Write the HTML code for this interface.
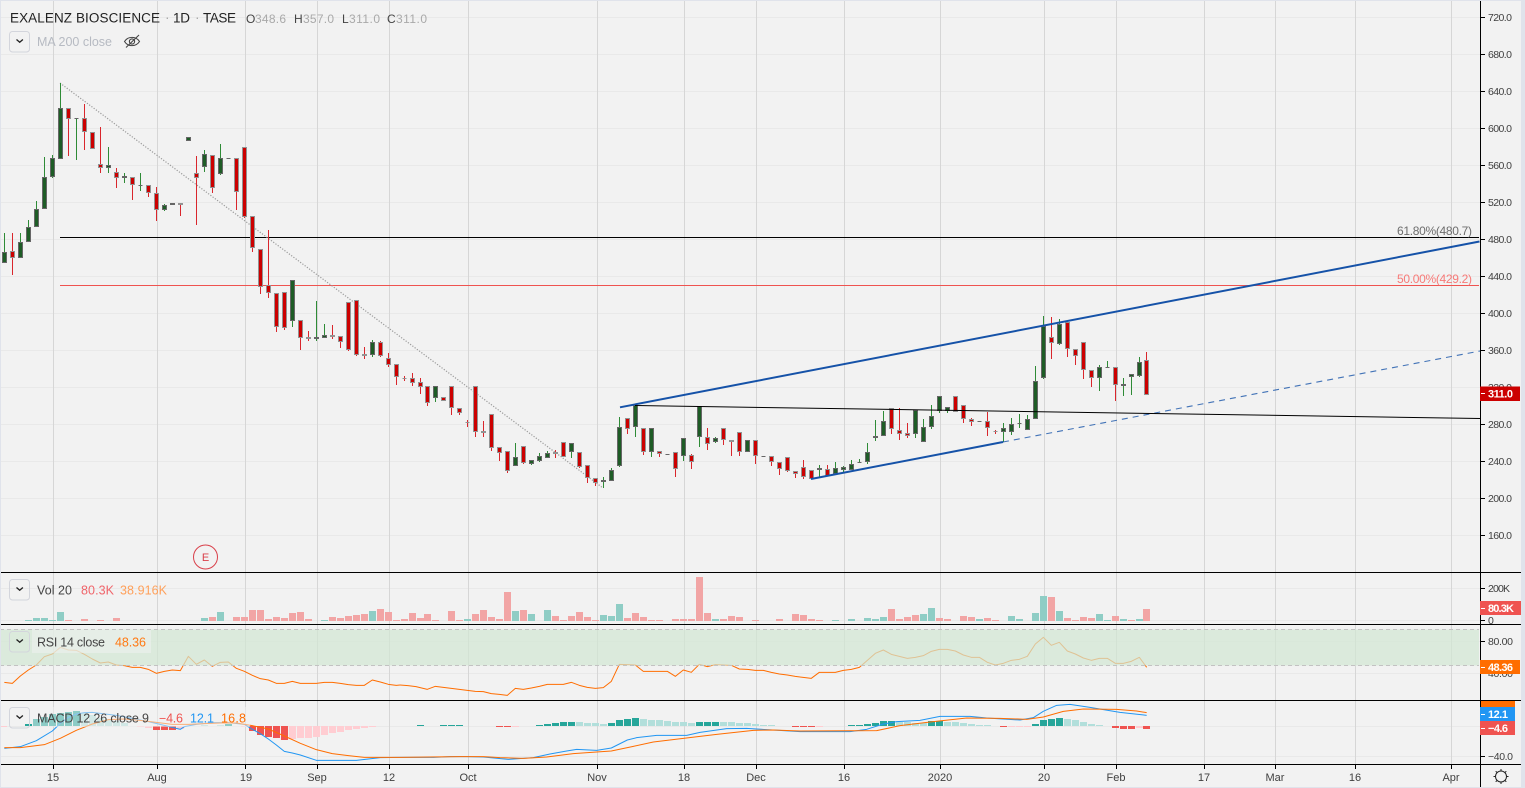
<!DOCTYPE html>
<html lang="en"><head><meta charset="utf-8"><title>EXALENZ BIOSCIENCE</title>
<style>html,body{margin:0;padding:0;background:#f2f2f2;width:1525px;height:788px;overflow:hidden}svg{display:block;font-family:"Liberation Sans",sans-serif}</style></head><body>
<svg width="1525" height="788" viewBox="0 0 1525 788" xmlns="http://www.w3.org/2000/svg">
<rect width="1525" height="788" fill="#f2f2f2"/>
<!-- grid -->
<path stroke="#e9e9e9" fill="none" d="M0 17.5H1480M0 54.5H1480M0 91.5H1480M0 128.5H1480M0 165.5H1480M0 202.5H1480M0 239.5H1480M0 276.5H1480M0 313.5H1480M0 350.5H1480M0 387.5H1480M0 424.5H1480M0 461.5H1480M0 498.5H1480M0 535.5H1480M0 588.5H1480M0 620.5H1480M0 641.5H1480M0 673.5H1480M0 726.5H1480M0 756.5H1480"/>
<path stroke="#d6d6d6" fill="none" d="M53.5 0V765M157.5 0V765M245.5 0V765M317.5 0V765M389.5 0V765M468.5 0V765M597.5 0V765M684.5 0V765M756.5 0V765M844.5 0V765M940.5 0V765M1044.5 0V765M1116.5 0V765M1204.5 0V765M1275.5 0V765M1355.5 0V765M1451.5 0V765"/>
<!-- fib -->
<path stroke="#000" fill="none" d="M60 237.5H1479"/>
<path stroke="#ef5350" fill="none" d="M60 285.5H1479"/>
<text x="1397" y="235" font-size="12" fill="#6d6d6d" textLength="75">61.80%(480.7)</text>
<text x="1397" y="283" font-size="12" fill="#f77a78" textLength="75">50.00%(429.2)</text>
<!-- dotted -->
<path stroke="#9a9a9a" stroke-width="1.2" stroke-dasharray="1.2 1.6" fill="none" d="M60 83L603 488"/>
<!-- wicks -->
<path stroke="#d9262c" fill="none" d="M12.5 233V275M68.5 108V156M84.5 104V150M92.5 132V149M100.5 127V173M116.5 168V188M132.5 177V200M148.5 185V197M156.5 187V221M180.5 203V216M196.5 156V225M212.5 155V193M236.5 158V210M244.5 147V218M252.5 216V252M260.5 249V294M268.5 230V298M276.5 293V332M284.5 292V330M300.5 320V350M308.5 331V341M332.5 325V339M340.5 336V348M348.5 302V351M356.5 300V356M364.5 347V359M380.5 341V357M388.5 353V367M396.5 364V385M404.5 376V381M412.5 373V386M420.5 378V394M427.5 386V406M451.5 386V415M459.5 408V415M467.5 420V427M475.5 386V437M483.5 421V437M491.5 414V451M499.5 447V461M507.5 451V473M523.5 446V464M555.5 450V458M579.5 452V468M587.5 465V483M595.5 478V486M627.5 418V434M643.5 428V455M659.5 451V457M675.5 452V477M691.5 454V469M707.5 428V450M723.5 428V445M731.5 440V456M739.5 432V456M755.5 440V464M771.5 456V466M779.5 462V475M787.5 457V472M795.5 471V478M803.5 460V479M827.5 465V476M891.5 408V434M899.5 408V440M907.5 423V438M963.5 405V423M971.5 418V426M987.5 412V436M995.5 430V434M1051.5 317V359M1067.5 322V357M1075.5 349V365M1083.5 342V379M1091.5 370V387M1115.5 367V401M1146.5 352V395"/>
<path stroke="#2e8b36" fill="none" d="M4.5 233V263M20.5 233V258M28.5 220V242M36.5 201V227M44.5 157V209M52.5 155V178M60.5 83V159M76.5 118V160M108.5 147V173M124.5 173V183M140.5 173V191M164.5 204V211M204.5 150V172M220.5 144V175M292.5 280V327M316.5 301V341M324.5 324V338M372.5 340V357M435.5 386V402M515.5 443V466M531.5 460V465M539.5 453V462M547.5 451V458M571.5 443V458M603.5 477V488M611.5 468V481M619.5 417V467M635.5 405V437M651.5 428V457M683.5 438V461M699.5 406V447M715.5 437V443M819.5 465V477M835.5 462V475M843.5 466V472M851.5 460V470M859.5 459V463M867.5 443V464M875.5 420V441M883.5 411V436M915.5 410V438M923.5 419V442M931.5 405V429M939.5 396V413M947.5 407V413M1003.5 423V442M1011.5 418V435M1019.5 414V428M1027.5 415V430M1035.5 366V419M1043.5 316V379M1059.5 319V345M1099.5 365V391M1107.5 361V368M1123.5 378V396M1131.5 374V395M1139.5 357V377"/>
<!-- red bodies -->
<path fill="#cc0000" stroke="#939393" d="M10.5 251.5h4v6h-4zM66.5 108.5h4v10h-4zM82.5 118.5h4v13h-4zM90.5 132.5h4v16h-4zM98.5 164.5h4v3h-4zM114.5 172.5h4v5h-4zM130.5 177.5h4v7h-4zM146.5 185.5h4v7h-4zM154.5 193.5h4v16h-4zM178.5 203.5h4v1h-4zM194.5 173.5h4v4h-4zM210.5 155.5h4v32h-4zM234.5 158.5h4v33h-4zM242.5 147.5h4v69h-4zM250.5 216.5h4v31h-4zM258.5 249.5h4v37h-4zM266.5 285.5h4v7h-4zM274.5 293.5h4v33h-4zM282.5 292.5h4v35h-4zM298.5 320.5h4v17h-4zM306.5 337.5h4v1h-4zM330.5 335.5h4v1h-4zM338.5 336.5h4v5h-4zM346.5 302.5h4v47h-4zM354.5 300.5h4v54h-4zM362.5 354.5h4v1h-4zM378.5 342.5h4v13h-4zM386.5 358.5h4v6h-4zM394.5 364.5h4v12h-4zM402.5 378.5h4v0h-4zM410.5 378.5h4v4h-4zM418.5 382.5h4v4h-4zM425.5 386.5h4v16h-4zM441.5 397.5h4v3h-4zM449.5 386.5h4v21h-4zM457.5 408.5h4v4h-4zM465.5 422.5h4v0h-4zM473.5 386.5h4v45h-4zM481.5 431.5h4v1h-4zM489.5 414.5h4v33h-4zM497.5 447.5h4v5h-4zM505.5 451.5h4v19h-4zM521.5 446.5h4v16h-4zM553.5 452.5h4v1h-4zM561.5 442.5h4v14h-4zM577.5 452.5h4v14h-4zM585.5 465.5h4v12h-4zM593.5 478.5h4v4h-4zM625.5 418.5h4v10h-4zM641.5 428.5h4v23h-4zM657.5 451.5h4v2h-4zM673.5 452.5h4v16h-4zM689.5 455.5h4v6h-4zM705.5 437.5h4v6h-4zM721.5 428.5h4v11h-4zM729.5 440.5h4v1h-4zM737.5 432.5h4v19h-4zM753.5 440.5h4v15h-4zM769.5 456.5h4v5h-4zM777.5 462.5h4v6h-4zM785.5 457.5h4v13h-4zM793.5 471.5h4v2h-4zM801.5 467.5h4v9h-4zM809.5 470.5h4v8h-4zM825.5 469.5h4v6h-4zM889.5 408.5h4v20h-4zM897.5 430.5h4v3h-4zM905.5 433.5h4v2h-4zM953.5 396.5h4v15h-4zM961.5 405.5h4v13h-4zM969.5 419.5h4v2h-4zM985.5 421.5h4v6h-4zM993.5 431.5h4v0h-4zM1049.5 337.5h4v5h-4zM1065.5 322.5h4v26h-4zM1073.5 349.5h4v6h-4zM1081.5 342.5h4v27h-4zM1089.5 370.5h4v7h-4zM1113.5 367.5h4v17h-4zM1144.5 360.5h4v34h-4z"/>
<!-- green bodies -->
<path fill="#1e5c26" stroke="#666" d="M2.5 252.5h4v10h-4zM18.5 242.5h4v15h-4zM26.5 227.5h4v14h-4zM34.5 209.5h4v17h-4zM42.5 177.5h4v31h-4zM50.5 158.5h4v18h-4zM58.5 108.5h4v50h-4zM74.5 118.5h4v0h-4zM106.5 165.5h4v2h-4zM122.5 176.5h4v1h-4zM138.5 185.5h4v0h-4zM162.5 205.5h4v4h-4zM170.5 203.5h4v1h-4zM186.5 137.5h4v3h-4zM202.5 154.5h4v12h-4zM218.5 158.5h4v15h-4zM226.5 158.5h4v0h-4zM290.5 280.5h4v40h-4zM314.5 337.5h4v1h-4zM322.5 335.5h4v2h-4zM370.5 342.5h4v12h-4zM433.5 386.5h4v11h-4zM513.5 457.5h4v8h-4zM529.5 460.5h4v3h-4zM537.5 456.5h4v4h-4zM545.5 453.5h4v4h-4zM569.5 443.5h4v8h-4zM601.5 480.5h4v1h-4zM609.5 470.5h4v10h-4zM617.5 427.5h4v38h-4zM633.5 405.5h4v21h-4zM649.5 428.5h4v23h-4zM665.5 454.5h4v0h-4zM681.5 438.5h4v17h-4zM697.5 406.5h4v30h-4zM713.5 438.5h4v3h-4zM745.5 440.5h4v11h-4zM761.5 456.5h4v0h-4zM817.5 468.5h4v1h-4zM833.5 468.5h4v5h-4zM841.5 467.5h4v2h-4zM849.5 464.5h4v5h-4zM857.5 462.5h4v0h-4zM865.5 452.5h4v9h-4zM873.5 436.5h4v1h-4zM881.5 421.5h4v14h-4zM913.5 410.5h4v23h-4zM921.5 427.5h4v14h-4zM929.5 416.5h4v10h-4zM937.5 396.5h4v14h-4zM945.5 407.5h4v3h-4zM977.5 421.5h4v0h-4zM1001.5 428.5h4v3h-4zM1009.5 424.5h4v7h-4zM1017.5 423.5h4v0h-4zM1025.5 419.5h4v10h-4zM1033.5 381.5h4v37h-4zM1041.5 326.5h4v51h-4zM1057.5 324.5h4v19h-4zM1097.5 367.5h4v10h-4zM1105.5 367.5h4v0h-4zM1121.5 384.5h4v1h-4zM1129.5 374.5h4v2h-4zM1137.5 362.5h4v13h-4z"/>
<!-- trend lines -->
<path stroke="#1552a8" stroke-width="2" fill="none" d="M620 407.3L1479.5 241.5M811 479L1003 442"/>
<path stroke="#1552a8" stroke-width="1.1" stroke-dasharray="6 5" fill="none" opacity=".8" d="M1003 442L1480 351"/>
<path stroke="#000" stroke-width="1" fill="none" d="M635 405.5L1480 418.5"/>
<!-- E circle -->
<circle cx="205.5" cy="557" r="12" fill="none" stroke="#d9404a"/>
<text x="205.5" y="561" font-size="11" fill="#d9404a" text-anchor="middle">E</text>
<!-- volume -->
<path stroke="#8fcdc5" stroke-width="7" fill="none" d="M28.5 621v-1M36.5 621v-3M44.5 621v-3M52.5 621v-1M60.5 621v-9M204.5 621v-3M220.5 621v-9M324.5 621v-1M372.5 621v-10M467.5 621v-2M515.5 621v-10M531.5 621v-7M547.5 621v-11M603.5 621v-6M611.5 621v-5M619.5 621v-17M715.5 621v-2M835.5 621v-1M851.5 621v-2M867.5 621v-3M875.5 621v-2M883.5 621v-4M923.5 621v-7M931.5 621v-13M979.5 621v-2M1011.5 621v-5M1019.5 621v-2M1035.5 621v-8M1043.5 621v-25M1059.5 621v-10M1099.5 621v-7M1107.5 621v-1M1123.5 621v-2M1139.5 621v-2"/>
<path stroke="#f2a5a5" stroke-width="7" fill="none" d="M68.5 621v-1M84.5 621v-2M100.5 621v-1M116.5 621v-3M212.5 621v-4M236.5 621v-4M244.5 621v-4M252.5 621v-11M260.5 621v-11M268.5 621v-2M276.5 621v-4M284.5 621v-3M292.5 621v-8M300.5 621v-9M308.5 621v-2M332.5 621v-4M340.5 621v-3M348.5 621v-5M356.5 621v-6M364.5 621v-7M380.5 621v-12M388.5 621v-9M396.5 621v-1M404.5 621v-2M412.5 621v-8M420.5 621v-3M427.5 621v-7M435.5 621v-1M451.5 621v-10M459.5 621v-1M475.5 621v-7M483.5 621v-11M491.5 621v-4M499.5 621v-2M507.5 621v-29M523.5 621v-11M555.5 621v-5M563.5 621v-1M571.5 621v-5M579.5 621v-9M587.5 621v-4M595.5 621v-1M627.5 621v-3M635.5 621v-8M643.5 621v-4M651.5 621v-1M659.5 621v-1M675.5 621v-2M683.5 621v-2M691.5 621v-2M699.5 621v-44M707.5 621v-8M723.5 621v-2M731.5 621v-5M739.5 621v-4M755.5 621v-1M779.5 621v-2M795.5 621v-7M803.5 621v-6M811.5 621v-2M819.5 621v-1M891.5 621v-12M899.5 621v-2M907.5 621v-4M915.5 621v-6M939.5 621v-3M947.5 621v-2M963.5 621v-5M971.5 621v-4M987.5 621v-3M995.5 621v-1M1051.5 621v-24M1067.5 621v-3M1075.5 621v-1M1083.5 621v-4M1091.5 621v-3M1115.5 621v-5M1131.5 621v-1M1146.5 621v-12"/>
<!-- RSI line -->
<g fill="none" stroke="#ff6d00" stroke-width="3" stroke-linejoin="round">
<path transform="translate(0 570) scale(.33333)" d="M13 337L37 340 61 318 85 300 109 285 133 260 157 252 181 232 205 240 229 241 253 253 277 267 301 279 325 276 349 285 373 287 397 292 421 292 445 298 469 310 493 304 517 300 541 302 565 259 589 283 613 270 637 289 661 277 685 276 709 295 733 304 757 316 781 326 805 330 829 340 853 340 877 334 901 340 925 340 949 340 973 337 997 337 1021 340 1045 344 1069 346 1093 346 1117 330 1141 336 1165 343 1189 346 1200 345"/>
<path transform="translate(400 570) scale(.33333)" d="M0 345L24 347 48 350 82 358 106 349 130 352 154 355 178 358 202 361 226 364 250 365 274 371 298 373 322 376 346 355 370 358 394 354 418 349 442 343 466 343 490 343 514 337 538 346 562 352 586 355 610 353 634 334 658 283 682 284 706 285 730 304 754 304 778 304 802 304 826 319 850 300 874 307 898 283 922 290 946 284 970 285 994 286 1018 297 1042 298 1066 301 1090 301 1114 307 1138 312 1162 315 1186 319 1200 321"/>
<path transform="translate(800 570) scale(.33333)" d="M0 321L34 325 58 307 82 307 106 307 130 301 154 298 178 292 202 271 226 250 250 240 274 253 298 259 322 265 346 262 370 257 394 244 418 238 442 238 466 243 490 255 514 262 538 262 562 277 586 285 610 280 634 271 658 268 682 259 706 222 730 202 754 226 778 217 802 243 826 252 850 264 874 271 898 265 922 265 946 280 970 280 994 274 1018 262 1040 292"/>
</g>
<rect x="0" y="629.5" width="1479" height="36" fill="rgb(209,231,211)" fill-opacity=".7"/>
<path stroke="#c2c2c2" stroke-dasharray="4 3" fill="none" d="M0 629.5H1479M0 665.5H1479"/>
<!-- MACD histogram -->
<path stroke="#26a69a" stroke-width="7" fill="none" d="M28.5 726v-2M36.5 726v-7M44.5 726v-9M52.5 726v-12M60.5 726v-13M68.5 726v-14M76.5 726v-15M228.5 726v-2M420.5 726v-1M443.5 726v-1M451.5 726v-1M459.5 726v-1M539.5 726v-1M547.5 726v-2M555.5 726v-3M563.5 726v-4M571.5 726v-4M611.5 726v-3M619.5 726v-6M627.5 726v-7M635.5 726v-8M699.5 726v-4M707.5 726v-4M715.5 726v-4M851.5 726v-1M859.5 726v-1M867.5 726v-2M875.5 726v-3M883.5 726v-5M891.5 726v-5M931.5 726v-5M939.5 726v-5M1035.5 726v-2M1043.5 726v-6M1051.5 726v-7M1059.5 726v-8"/>
<path stroke="#b2dfdb" stroke-width="7" fill="none" d="M84.5 726v-13M92.5 726v-11M100.5 726v-8M108.5 726v-7M116.5 726v-5M124.5 726v-3M204.5 726v-1M220.5 726v-1M579.5 726v-4M587.5 726v-3M595.5 726v-3M603.5 726v-2M643.5 726v-7M651.5 726v-6M659.5 726v-6M667.5 726v-5M675.5 726v-4M683.5 726v-4M691.5 726v-3M723.5 726v-4M731.5 726v-4M739.5 726v-3M747.5 726v-3M755.5 726v-2M763.5 726v-1M771.5 726v-1M899.5 726v-4M907.5 726v-4M915.5 726v-3M923.5 726v-3M947.5 726v-4M955.5 726v-4M963.5 726v-3M971.5 726v-2M979.5 726v-1M987.5 726v-1M1067.5 726v-7M1075.5 726v-6M1083.5 726v-4M1091.5 726v-2M1099.5 726v-1"/>
<path stroke="#ef5350" stroke-width="7" fill="none" d="M156.5 726v4M164.5 726v4M172.5 726v4M252.5 726v5M260.5 726v9M268.5 726v11M276.5 726v12M284.5 726v14M499.5 726v1M507.5 726v1M795.5 726v1M803.5 726v1M811.5 726v1M1003.5 726v1M1115.5 726v2M1123.5 726v3M1131.5 726v3M1146.5 726v3"/>
<path stroke="#ffcdd2" stroke-width="7" fill="none" d="M3.5 726v1M140.5 726v1M148.5 726v2M180.5 726v3M244.5 726v1M292.5 726v13M300.5 726v12M308.5 726v12M316.5 726v11M324.5 726v9M332.5 726v7M340.5 726v6M348.5 726v4M356.5 726v3M364.5 726v2M372.5 726v1M515.5 726v1M819.5 726v1M1011.5 726v1M1019.5 726v1M1027.5 726v1M1139.5 726v2"/>
<!-- MACD lines -->
<g fill="none" stroke-width="3" stroke-linejoin="round">
<path stroke="#2196f3" transform="translate(0 570) scale(.33333)" d="M13 535L61 530 109 512 157 483 181 460 205 442 229 432 253 428 277 427 301 430 349 436 397 445 445 455 493 466 541 478 553 470 589 463 637 458 685 458 733 463 757 478 781 491 805 507 829 525 853 544 877 549 901 555 949 571 997 571 1069 571 1141 563 1200 562"/>
<path stroke="#2196f3" transform="translate(400 570) scale(.33333)" d="M0 562L100 562 150 560 200 560 250 561 325 568 400 563 450 552 500 543 530 538 590 541 634 534 682 510 710 503 770 496 860 496 900 487 980 476 1040 475 1100 479 1200 485"/>
<path stroke="#2196f3" transform="translate(800 570) scale(.33333)" d="M0 485L150 485 200 478 250 462 290 455 360 451 420 439 510 439 560 444 660 450 700 443 730 424 770 406 810 403 870 412 960 427 1040 436"/>
<path stroke="#ff6d00" transform="translate(0 570) scale(.33333)" d="M13 533L61 533 133 524 181 505 229 481 277 462 325 449 373 447 421 451 469 457 517 463 565 463 613 461 661 459 709 459 757 467 805 477 853 498 901 520 949 539 997 551 1045 557 1093 562 1200 562"/>
<path stroke="#ff6d00" transform="translate(400 570) scale(.33333)" d="M0 562L180 560 250 560 300 563 370 565 440 561 520 551 590 546 634 543 700 529 760 516 850 505 950 493 1060 481 1120 480 1200 483"/>
<path stroke="#ff6d00" transform="translate(800 570) scale(.33333)" d="M0 483L230 482 300 467 400 455 500 444 600 445 680 448 730 441 790 424 850 417 950 418 1010 423 1040 428"/>
</g>
<!-- legend backgrounds -->
<rect x="32" y="630" width="119" height="23" fill="#f2f2f2" fill-opacity=".5"/>
<rect x="32" y="707" width="218" height="20" fill="#f2f2f2" fill-opacity=".5"/>
<!-- separators / axis -->
<path stroke="#000" fill="none" d="M0 572.5H1521M0 624.5H1521M0 700.5H1521M0 764.5H1521M1480.5 0V788"/>
<rect x="1521" y="0" width="4" height="788" fill="#e0e3eb"/>
<path stroke="#e0e3eb" fill="none" d="M0 .5H1525M0 787.5H1525M.5 0V788"/>
<!-- axis ticks -->
<path stroke="#000" fill="none" d="M1481 17.5h4M1481 54.5h4M1481 91.5h4M1481 128.5h4M1481 165.5h4M1481 202.5h4M1481 239.5h4M1481 276.5h4M1481 313.5h4M1481 350.5h4M1481 424.5h4M1481 461.5h4M1481 498.5h4M1481 535.5h4M1481 588.5h4M1481 620.5h4M1481 641.5h4M1481 756.5h4M53.5 765v4M157.5 765v4M245.5 765v4M317.5 765v4M389.5 765v4M468.5 765v4M597.5 765v4M684.5 765v4M756.5 765v4M844.5 765v4M940.5 765v4M1044.5 765v4M1116.5 765v4M1204.5 765v4M1275.5 765v4M1355.5 765v4M1451.5 765v4"/>
<g font-size="10.5" fill="#3f3f3f">
<text x="1488" y="21" textLength="24">720.0</text><text x="1488" y="58" textLength="24">680.0</text><text x="1488" y="95" textLength="24">640.0</text><text x="1488" y="132" textLength="24">600.0</text><text x="1488" y="169" textLength="24">560.0</text><text x="1488" y="206" textLength="24">520.0</text><text x="1488" y="243" textLength="24">480.0</text><text x="1488" y="280" textLength="24">440.0</text><text x="1488" y="317" textLength="24">400.0</text><text x="1488" y="354" textLength="24">360.0</text><text x="1488" y="391" textLength="24">320.0</text><text x="1488" y="428" textLength="24">280.0</text><text x="1488" y="465" textLength="24">240.0</text><text x="1488" y="502" textLength="24">200.0</text><text x="1488" y="539" textLength="24">160.0</text>
<text x="1488" y="592" textLength="22">200K</text><text x="1488" y="624">0</text><text x="1488" y="645" textLength="25">80.00</text><text x="1488" y="677" textLength="25">40.00</text><text x="1488" y="760" textLength="25">−40.0</text>
</g>
<g font-size="11" fill="#3f3f3f" text-anchor="middle">
<text x="53" y="781">15</text><text x="157" y="781">Aug</text><text x="246" y="781">19</text><text x="317" y="781">Sep</text><text x="389" y="781">12</text><text x="468" y="781">Oct</text><text x="597" y="781">Nov</text><text x="684" y="781">18</text><text x="756" y="781">Dec</text><text x="844" y="781">16</text><text x="940" y="781">2020</text><text x="1044" y="781">20</text><text x="1116" y="781">Feb</text><text x="1204" y="781">17</text><text x="1275" y="781">Mar</text><text x="1355" y="781">16</text><text x="1451" y="781">Apr</text>
</g>
<!-- price tags -->
<rect x="1480" y="386.5" width="40" height="14.5" fill="#cc0000"/><path stroke="#fff" d="M1481 393.5h4"/><text x="1488" y="397.5" font-size="11" font-weight="bold" fill="#fff" textLength="25">311.0</text>
<rect x="1480" y="601" width="41" height="14" fill="#ef5350"/><path stroke="#fff" d="M1481 608.5h4"/><text x="1488" y="612" font-size="11" font-weight="bold" fill="#fff" textLength="26">80.3K</text>
<rect x="1480" y="660" width="40" height="14" fill="#ff6d00"/><path stroke="#fff" d="M1481 667.5h4"/><text x="1488" y="671" font-size="11" font-weight="bold" fill="#fff" textLength="25">48.36</text>
<rect x="1481" y="701" width="34" height="7" fill="#ff6d00"/>
<rect x="1480" y="707" width="35" height="14" fill="#2196f3"/><path stroke="#fff" d="M1481 714.5h4"/><text x="1488" y="718" font-size="11" font-weight="bold" fill="#fff" textLength="20">12.1</text>
<rect x="1480" y="721" width="35" height="14" fill="#ef5350"/><path stroke="#fff" d="M1481 728.5h4"/><text x="1488" y="732" font-size="11" font-weight="bold" fill="#fff" textLength="20">−4.6</text>
<!-- gear -->
<g fill="none" stroke="#222" stroke-width="1"><circle cx="1501" cy="776.5" r="5.5"/><path d="M1501 769v2M1501 782v2M1493.5 776.5h2M1506.5 776.5h2M1495.7 771.2l1.4 1.4M1504.9 780.4l1.4 1.4M1495.7 781.8l1.4-1.4M1504.9 772.6l1.4-1.4"/></g>
<!-- title -->
<text x="10" y="22.5" font-size="13.5" fill="#222" textLength="150">EXALENZ BIOSCIENCE</text>
<text x="165" y="22" font-size="14" fill="#aaa">·</text>
<text x="173" y="22.5" font-size="13.5" fill="#222" textLength="17">1D</text>
<text x="195" y="22" font-size="14" fill="#aaa">·</text>
<text x="203" y="22.5" font-size="13.5" fill="#222" textLength="33">TASE</text>
<g font-size="12">
<text x="246" y="23" fill="#444">O</text><text x="255" y="23" fill="#a9a9a9" textLength="31">348.6</text>
<text x="294" y="23" fill="#444">H</text><text x="303" y="23" fill="#a9a9a9" textLength="31">357.0</text>
<text x="342" y="23" fill="#444">L</text><text x="349" y="23" fill="#a9a9a9" textLength="31">311.0</text>
<text x="387" y="23" fill="#444">C</text><text x="396" y="23" fill="#a9a9a9" textLength="31">311.0</text>
</g>
<!-- legends -->
<g fill="none" stroke-width="1">
<rect x="9.5" y="31.5" width="20" height="20.5" rx="3" stroke="#d3d5dc"/>
<rect x="9.5" y="579.5" width="20" height="20.5" rx="3" stroke="#d3d5dc"/>
<rect x="9.5" y="631.5" width="20" height="20.5" rx="3" stroke="#d3d5dc"/>
<rect x="9.5" y="707.5" width="20" height="20.5" rx="3" stroke="#d3d5dc"/>
<path stroke="#222" stroke-width="1.3" d="M16.5 39.5l3.2 2.8 3.2-2.8M16.5 587.5l3.2 2.8 3.2-2.8M16.5 639.5l3.2 2.8 3.2-2.8M16.5 715.5l3.2 2.8 3.2-2.8"/>
<!-- eye crossed -->
<path stroke="#444" stroke-width="1.1" d="M124.5 41.5C128 36 136 36 139.5 41.5C136 47 128 47 124.5 41.5Z"/><circle cx="132" cy="41.5" r="2.6" stroke="#444" stroke-width="1.1"/><path stroke="#444" stroke-width="1.1" d="M126 47.5L139 35"/>
</g>
<g font-size="12.5">
<text x="37" y="46" fill="#b6bac2" textLength="75">MA 200 close</text>
<text x="37" y="594.5" fill="#444" textLength="35">Vol 20</text>
<text x="81" y="594.5" fill="#f0646a" textLength="33">80.3K</text>
<text x="120" y="594.5" fill="#ffa05a" textLength="47">38.916K</text>
<text x="37" y="646.5" fill="#444" textLength="68">RSI 14 close</text>
<text x="115" y="646.5" fill="#ff7a14" textLength="31">48.36</text>
<text x="37" y="722.5" fill="#444" textLength="112">MACD 12 26 close 9</text>
<text x="159" y="722.5" fill="#ef5350" textLength="24">−4.6</text>
<text x="190" y="722.5" fill="#2196f3" textLength="24">12.1</text>
<text x="221" y="722.5" fill="#ff6d00" textLength="25">16.8</text>
</g>
</svg>
</body></html>
